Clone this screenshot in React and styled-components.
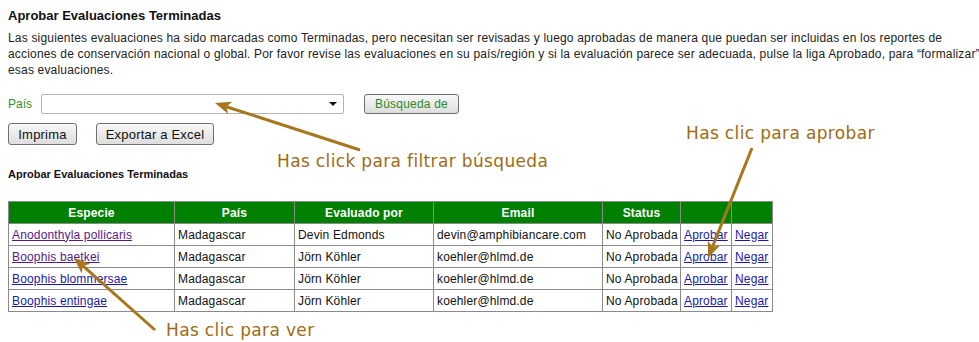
import React from 'react';
import styled, { createGlobalStyle } from 'styled-components';

const GlobalStyle = createGlobalStyle`
   html, body {
      margin: 0;
      padding: 0;
      background: #ffffff;
   }
   body {
      font-family: "Liberation Sans", Arial, sans-serif;
      color: #111;
   }
`;

const Page = styled.div`
   position: relative;
   width: 979px;
   height: 342px;
   padding: 8px;
   box-sizing: border-box;
   overflow: hidden;
`;

const Title = styled.h1`
   margin: 0;
   font-size: 13px;
   line-height: 16px;
   font-weight: bold;
`;

const Intro = styled.p`
   margin: 6px 0 0;
   width: 985px;
   font-size: 12px;
   line-height: 16px;
   letter-spacing: 0.18px;
   color: #222;
`;

const FilterRow = styled.div`
   display: flex;
   align-items: center;
   margin-top: 16px;
   height: 20px;
`;

const Label = styled.label`
   font-size: 12px;
   color: #2f8f2f;
   width: 33px;
`;

const SelectWrap = styled.div`
   position: relative;
   width: 303px;
   height: 20px;

   &::after {
      content: '';
      position: absolute;
      right: 7px;
      top: 8px;
      border-left: 4px solid transparent;
      border-right: 4px solid transparent;
      border-top: 4px solid #111;
      pointer-events: none;
   }
`;

const Select = styled.select`
   appearance: none;
   width: 100%;
   height: 100%;
   border: 1px solid #b4b4b4;
   border-radius: 2px;
   background: #fff;
   font-size: 12px;
   box-sizing: border-box;
`;

const Button = styled.button`
   height: ${p => p.$small ? '20px' : '22px'};
   width: ${p => p.$w}px;
   margin-left: ${p => p.$ml || 0}px;
   padding: 0;
   border: 1px solid #707070;
   border-radius: 3px;
   background: linear-gradient(#f7f7f7, #dedede);
   font-family: "Liberation Sans", Arial, sans-serif;
   font-size: ${p => p.$small ? '12px' : '13px'};
   letter-spacing: 0.2px;
   color: ${p => p.$green ? '#2c8a2c' : '#111'};
   box-sizing: border-box;
`;

const ButtonRow = styled.div`
   display: flex;
   margin-top: 9px;
`;

const SubTitle = styled.h2`
   margin: 22px 0 0;
   font-size: 11px;
   line-height: 14px;
   font-weight: bold;
`;

const Table = styled.table`
   margin-top: 20px;
   border-collapse: collapse;
   table-layout: fixed;
   width: 764px;
   font-size: 12px;
   letter-spacing: 0.15px;
   border: 1px solid #8a8a8a;
`;

const Th = styled.th`
   background: #008000;
   color: #fff;
   font-weight: bold;
   height: 21px;
   padding: 0 3px;
   border: 1px solid #8a8a8a;
   text-align: center;
`;

const Td = styled.td`
   height: 21px;
   padding: 0 3px;
   border: 1px solid #8a8a8a;
   white-space: nowrap;
   overflow: hidden;
`;

const Link = styled.a`
   color: ${p => p.$visited ? '#551a8b' : '#1a1aa6'};
   text-decoration: underline;
`;

const Overlay = styled.svg`
   position: absolute;
   left: 0;
   top: 0;
   pointer-events: none;
`;

const Callout = styled.span`
   position: absolute;
   left: ${p => p.$x}px;
   top: ${p => p.$y}px;
   font-family: "Comic Sans MS", "DejaVu Sans", sans-serif;
   font-size: 17px;
   color: #9c6c16;
   white-space: nowrap;
   letter-spacing: 0.35px;
`;

const rows = [
   { sp: 'Anodonthyla pollicaris', by: 'Devin Edmonds', mail: 'devin@amphibiancare.com', visited: true },
   { sp: 'Boophis baetkei', by: 'Jörn Köhler', mail: 'koehler@hlmd.de', visited: true },
   { sp: 'Boophis blommersae', by: 'Jörn Köhler', mail: 'koehler@hlmd.de' },
   { sp: 'Boophis entingae', by: 'Jörn Köhler', mail: 'koehler@hlmd.de' },
];

const cols = [166, 120, 139, 169, 78, 51, 41];

function Arrow({ from, to }) {
   const dx = to[0] - from[0];
   const dy = to[1] - from[1];
   const len = Math.sqrt(dx * dx + dy * dy);
   const ux = dx / len, uy = dy / len;
   const L = 16, W = 13;
   const bx = to[0] - ux * L, by = to[1] - uy * L;
   const pts = [
      `${to[0]},${to[1]}`,
      `${bx - uy * W / 2},${by + ux * W / 2}`,
      `${bx + ux * 4},${by + uy * 4}`,
      `${bx + uy * W / 2},${by - ux * W / 2}`,
   ].join(' ');
   return (
      <g>
         <line x1={from[0]} y1={from[1]} x2={bx + ux * 4} y2={by + uy * 4} stroke="#a8761c" strokeWidth="3" />
         <polygon points={pts} fill="#a8761c" />
      </g>
   );
}

export default function App() {
   return (
      <Page>
         <GlobalStyle />
         <Title>Aprobar Evaluaciones Terminadas</Title>
         <Intro>
            Las siguientes evaluaciones ha sido marcadas como Terminadas, pero necesitan ser revisadas y luego aprobadas de manera que puedan ser incluidas en los reportes de acciones de conservación nacional o global. Por favor revise las evaluaciones en su país/región y si la evaluación parece ser adecuada, pulse la liga Aprobado, para “formalizar” esas evaluaciones.
         </Intro>

         <FilterRow>
            <Label>País</Label>
            <SelectWrap>
               <Select defaultValue="">
                  <option value=""></option>
               </Select>
            </SelectWrap>
            <Button $small $green $w={95} $ml={20}>Búsqueda de</Button>
         </FilterRow>

         <ButtonRow>
            <Button $w={69}>Imprima</Button>
            <Button $w={118} $ml={19}>Exportar a Excel</Button>
         </ButtonRow>

         <SubTitle>Aprobar Evaluaciones Terminadas</SubTitle>

         <Table>
            <colgroup>
               {cols.map((w, i) => <col key={i} style={{ width: w }} />)}
            </colgroup>
            <thead>
               <tr>
                  <Th>Especie</Th>
                  <Th>País</Th>
                  <Th>Evaluado por</Th>
                  <Th>Email</Th>
                  <Th>Status</Th>
                  <Th></Th>
                  <Th></Th>
               </tr>
            </thead>
            <tbody>
               {rows.map(r => (
                  <tr key={r.sp}>
                     <Td><Link href="#" $visited={r.visited}>{r.sp}</Link></Td>
                     <Td>Madagascar</Td>
                     <Td>{r.by}</Td>
                     <Td>{r.mail}</Td>
                     <Td>No Aprobada</Td>
                     <Td><Link href="#">Aprobar</Link></Td>
                     <Td><Link href="#">Negar</Link></Td>
                  </tr>
               ))}
            </tbody>
         </Table>

         <Overlay width="979" height="342">
            <Arrow from={[360, 150]} to={[215, 103]} />
            <Arrow from={[752, 148]} to={[708, 258]} />
            <Arrow from={[155, 330]} to={[74, 258]} />
         </Overlay>
         <Callout $x={277} $y={151}>Has click para filtrar búsqueda</Callout>
         <Callout $x={686} $y={123}>Has clic para aprobar</Callout>
         <Callout $x={166} $y={320}>Has clic para ver</Callout>
      </Page>
   );
}
